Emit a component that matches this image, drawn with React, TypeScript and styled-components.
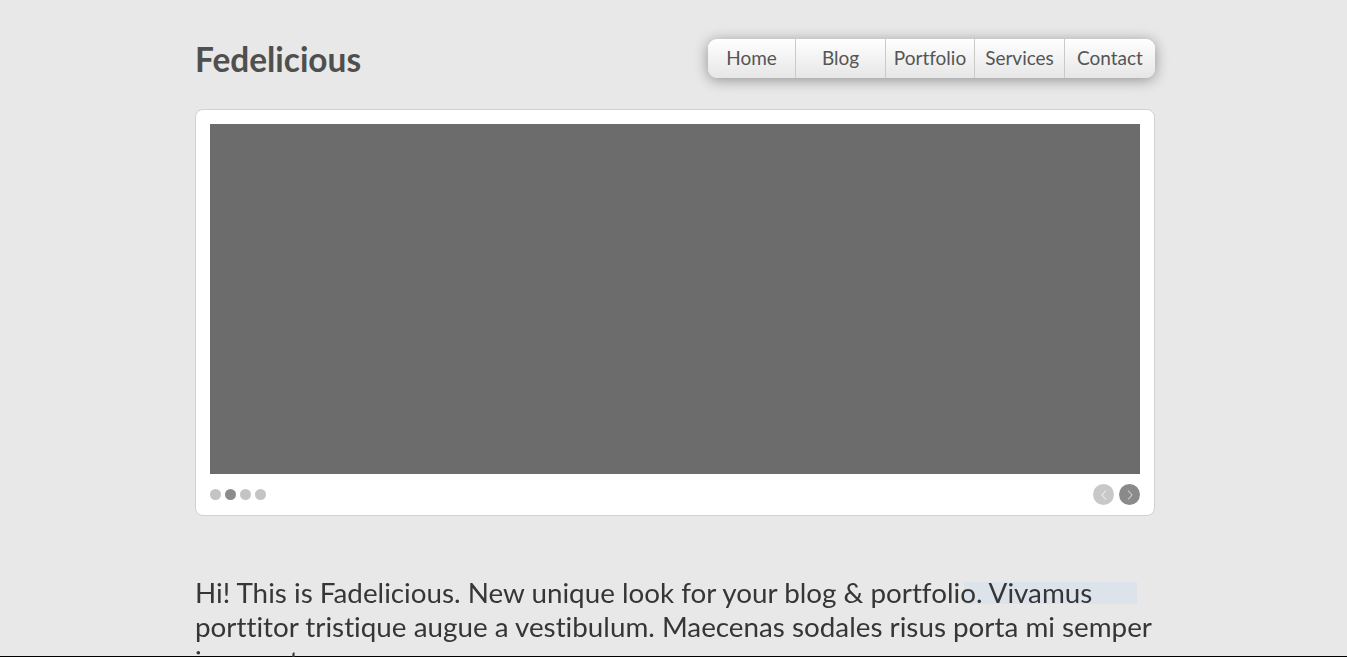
import React from "react";
import styled, { createGlobalStyle } from "styled-components";

const Global = createGlobalStyle`
  html, body { margin: 0; padding: 0; }
  body {
    background: #e8e8e8;
    font-family: Lato, "Open Sans", sans-serif;
    font-variant-ligatures: none;
    overflow: hidden;
  }
`;

const Page = styled.div`
  width: 960px;
  margin: 0 auto;
  padding-left: 3px;
`;

const Header = styled.header`
  display: flex;
  align-items: center;
  justify-content: space-between;
  height: 109px;
  box-sizing: border-box;
`;

const Title = styled.h1`
  margin: 0;
  font-size: 33.4px;
  font-weight: 700;
  color: #4f4f4f;
  padding-top: 9px;
`;

const Nav = styled.nav`
  display: flex;
  height: 39px;
  margin-top: 8px;
  border-radius: 9px;
  background: linear-gradient(#ffffff, #e6e6e6);
  box-shadow: 0 2px 14px rgba(0, 0, 0, 0.38);
  overflow: hidden;
`;

const NavItem = styled.a<{ $w: number; $last?: boolean }>`
  width: ${(p) => p.$w}px;
  display: flex;
  align-items: center;
  justify-content: center;
  font-size: 19px;
  color: #555;
  text-decoration: none;
  padding-bottom: 2px;
  border-right: ${(p) => (p.$last ? "none" : "1px solid #cacaca")};
  box-sizing: border-box;
`;

const Card = styled.section`
  background: #fff;
  border: 1px solid #d2d2d2;
  border-radius: 8px;
  padding: 14px 14px 0;
`;

const Slide = styled.div`
  height: 350px;
  background: #6c6c6c;
`;

const Controls = styled.div`
  display: flex;
  align-items: center;
  justify-content: space-between;
  height: 41px;
`;

const Dots = styled.div`
  display: flex;
  gap: 4px;
`;

const Dot = styled.span<{ $active?: boolean }>`
  width: 11px;
  height: 11px;
  border-radius: 50%;
  background: ${(p) => (p.$active ? "#8c8c8c" : "#c4c4c4")};
`;

const Arrows = styled.div`
  display: flex;
  gap: 5px;
`;

const Arrow = styled.button<{ $dark?: boolean }>`
  width: 21px;
  height: 21px;
  border-radius: 50%;
  border: none;
  padding: 0;
  display: flex;
  align-items: center;
  justify-content: center;
  background: ${(p) => (p.$dark ? "#8a8a8a" : "#c8c8c8")};
  color: ${(p) => (p.$dark ? "#cfcfcf" : "#ececec")};
`;

const Intro = styled.p`
  position: relative;
  margin: 60px 0 0;
  font-size: 27.8px;
  line-height: 34px;
  color: #363636;
`;

const Words = styled.span`
  position: relative;
  z-index: 1;
`;

const Highlight = styled.span`
  position: absolute;
  left: 769px;
  top: 6px;
  width: 173px;
  height: 22px;
  background: #dce3ea;
  z-index: 0;
`;

const BottomLine = styled.div`
  position: fixed;
  left: 0;
  right: 0;
  bottom: 0;
  height: 1px;
  background: #000;
`;

const Chevron = ({ dir }: { dir: "l" | "r" }) => (
  <svg width="10" height="12" viewBox="0 0 10 12">
    <path
      d={dir === "l" ? "M7 1.5 L3 6 L7 10.5" : "M3 1.5 L7 6 L3 10.5"}
      fill="none"
      stroke="currentColor"
      strokeWidth="1.1"
    />
  </svg>
);

const items = [
  { label: "Home", w: 88 },
  { label: "Blog", w: 90 },
  { label: "Portfolio", w: 89 },
  { label: "Services", w: 90 },
  { label: "Contact", w: 90 },
];

export default function App() {
  return (
    <>
      <Global />
      <Page>
        <Header>
          <Title>Fedelicious</Title>
          <Nav>
            {items.map((it, i) => (
              <NavItem key={it.label} href="#" $w={it.w} $last={i === items.length - 1}>
                {it.label}
              </NavItem>
            ))}
          </Nav>
        </Header>
        <Card>
          <Slide />
          <Controls>
            <Dots>
              <Dot />
              <Dot $active />
              <Dot />
              <Dot />
            </Dots>
            <Arrows>
              <Arrow>
                <Chevron dir="l" />
              </Arrow>
              <Arrow $dark>
                <Chevron dir="r" />
              </Arrow>
            </Arrows>
          </Controls>
        </Card>
        <Intro>
          <Highlight />
          <Words>
            Hi! This is Fadelicious. New unique look for your blog &amp; portfolio. Vivamus
            porttitor tristique augue a vestibulum. Maecenas sodales risus porta mi semper
            ipsum et.
          </Words>
        </Intro>
      </Page>
      <BottomLine />
    </>
  );
}
